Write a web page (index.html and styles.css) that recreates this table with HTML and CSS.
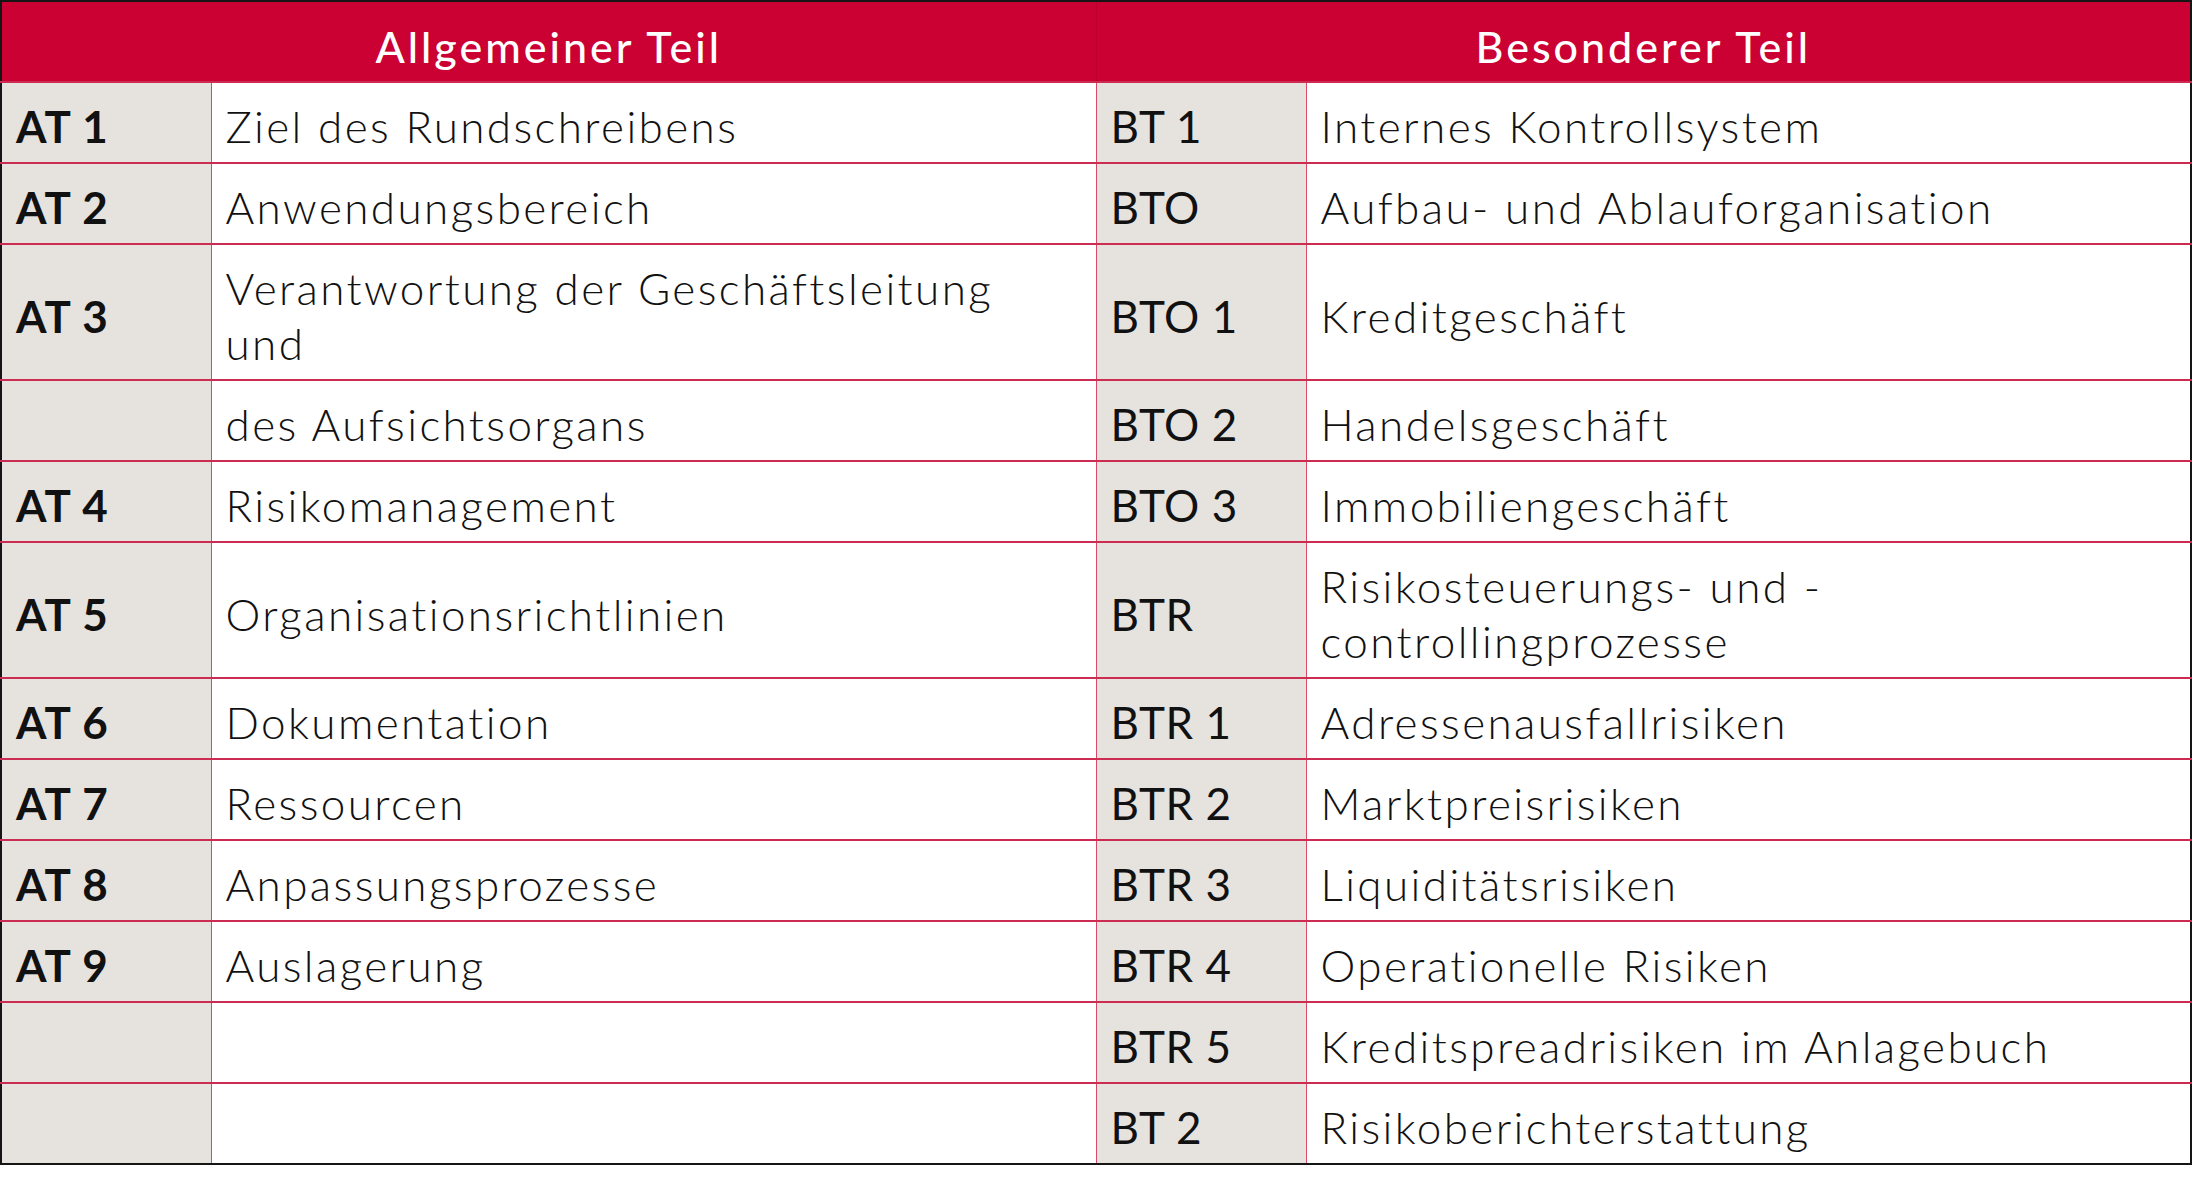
FILE: index.html
```html
<!DOCTYPE html>
<html lang="de">
<head>
<meta charset="utf-8">
<title>MaRisk Gliederung</title>
<link rel="stylesheet" href="styles.css">
</head>
<body>
<table class="grid">
  <colgroup>
    <col class="c-code">
    <col class="c-text">
    <col class="c-code">
    <col class="c-text">
  </colgroup>
  <thead>
    <tr class="head">
      <th colspan="2" class="h-left">Allgemeiner Teil</th>
      <th colspan="2">Besonderer Teil</th>
    </tr>
  </thead>
  <tbody>
    <tr><td class="code at">AT 1</td><td class="txt">Ziel des Rundschreibens</td><td class="code bt">BT 1</td><td class="txt">Internes Kontrollsystem</td></tr>
    <tr><td class="code at">AT 2</td><td class="txt">Anwendungsbereich</td><td class="code bt">BTO</td><td class="txt">Aufbau- und Ablauforganisation</td></tr>
    <tr class="tall"><td class="code at">AT 3</td><td class="txt">Verantwortung der Geschäftsleitung<br>und</td><td class="code bt">BTO 1</td><td class="txt">Kreditgeschäft</td></tr>
    <tr><td class="code at"></td><td class="txt">des Aufsichtsorgans</td><td class="code bt">BTO 2</td><td class="txt">Handelsgeschäft</td></tr>
    <tr><td class="code at">AT 4</td><td class="txt">Risikomanagement</td><td class="code bt">BTO 3</td><td class="txt">Immobiliengeschäft</td></tr>
    <tr class="tall"><td class="code at">AT 5</td><td class="txt">Organisationsrichtlinien</td><td class="code bt">BTR</td><td class="txt">Risikosteuerungs- und -<br>controllingprozesse</td></tr>
    <tr><td class="code at">AT 6</td><td class="txt">Dokumentation</td><td class="code bt">BTR 1</td><td class="txt">Adressenausfallrisiken</td></tr>
    <tr><td class="code at">AT 7</td><td class="txt">Ressourcen</td><td class="code bt">BTR 2</td><td class="txt">Marktpreisrisiken</td></tr>
    <tr><td class="code at">AT 8</td><td class="txt">Anpassungsprozesse</td><td class="code bt">BTR 3</td><td class="txt">Liquiditätsrisiken</td></tr>
    <tr><td class="code at">AT 9</td><td class="txt">Auslagerung</td><td class="code bt">BTR 4</td><td class="txt">Operationelle Risiken</td></tr>
    <tr><td class="code at"></td><td class="txt"></td><td class="code bt">BTR 5</td><td class="txt">Kreditspreadrisiken im Anlagebuch</td></tr>
    <tr><td class="code at"></td><td class="txt"></td><td class="code bt">BT 2</td><td class="txt">Risikoberichterstattung</td></tr>
  </tbody>
</table>
</body>
</html>
```
FILE: styles.css
```css
html, body {
  margin: 0;
  padding: 0;
  background: #ffffff;
}

body {
  font-family: "Lato", "Noto Sans", sans-serif;
  color: #111111;
}

.grid {
  width: 2190px;
  table-layout: fixed;
  border-collapse: collapse;
  border: 2px solid #151515;
}

.c-code {
  width: 210px;
}

.c-text {
  width: 885px;
}

.head th {
  height: 81px;
  box-sizing: border-box;
  padding: 10px 0 0 0;
  background: #cb0033;
  color: #ffffff;
  font-size: 43px;
  font-weight: 500;
  letter-spacing: 3px;
  line-height: 48px;
  text-align: center;
  vertical-align: middle;
  border: none;
}

.head .h-left {
  border-right: 1px solid #b8002c;
}

tbody td {
  height: 81px;
  box-sizing: border-box;
  padding: 8px 14px 0 14px;
  font-size: 44px;
  line-height: 55px;
  letter-spacing: 2.4px;
  vertical-align: middle;
  border-top: 2px solid #cc2c52;
  border-left: 1px solid #d84a69;
  border-right: 1px solid #d84a69;
  white-space: nowrap;
}

tbody tr.tall td {
  height: 136px;
}

.code {
  background: #e6e2dd;
}

.code.at {
  font-weight: 700;
  letter-spacing: 1px;
}

.code.bt {
  font-weight: 400;
  letter-spacing: 0.6px;
}

.txt {
  background: #ffffff;
  font-weight: 300;
}
```
